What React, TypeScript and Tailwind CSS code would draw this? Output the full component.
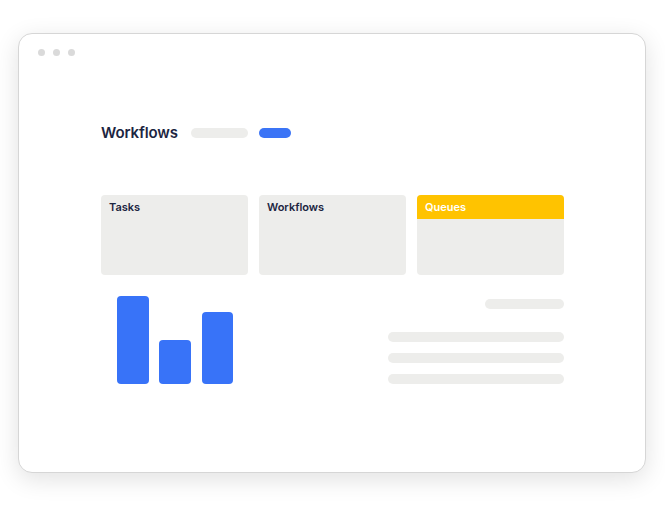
import React from 'react';

const Card = ({ title, active }: { title: string; active?: boolean }) => (
  <div className="h-[80px] rounded-[4px] bg-[#ededeb] overflow-hidden">
    {active ? (
      <div className="h-[24px] bg-[#ffc300] px-[8px] flex items-center text-[11px] font-semibold text-white">
        {title}
      </div>
    ) : (
      <div className="h-[24px] px-[8px] flex items-center text-[11px] font-semibold text-[#1c2541]">
        {title}
      </div>
    )}
  </div>
);

const App = () => {
  return (
    <div className="w-[665px] h-[512px] bg-white pt-[33px] pl-[18px] font-['Inter',sans-serif]">
      <div className="w-[628px] h-[440px] rounded-[14px] border border-[#d6d6d6] bg-white shadow-[0_6px_24px_rgba(0,0,0,0.12)]">
        <div className="flex gap-[8px] pt-[15px] pl-[19px]">
          <span className="w-[7px] h-[7px] rounded-full bg-[#dadada]" />
          <span className="w-[7px] h-[7px] rounded-full bg-[#dadada]" />
          <span className="w-[7px] h-[7px] rounded-full bg-[#dadada]" />
        </div>

        <div className="pl-[82px] pr-[81px]">
          <div className="mt-[67px] h-[20px] flex items-center">
            <h1 className="text-[15px] font-semibold text-[#1c2541] tracking-[-0.1px]">Workflows</h1>
            <span className="ml-[13px] w-[57px] h-[10px] rounded-full bg-[#ededeb]" />
            <span className="ml-[11px] w-[32px] h-[10px] rounded-full bg-[#3b74f6]" />
          </div>

          <div className="mt-[52px] grid grid-cols-3 gap-[11px]">
            <Card title="Tasks" />
            <Card title="Workflows" />
            <Card title="Queues" active />
          </div>

          <div className="mt-[21px] flex justify-between">
            <div className="pl-[16px] h-[88px] flex items-end gap-[10px]">
              <div className="w-[32px] h-[88px] rounded-[4px] bg-[#3873f8]" />
              <div className="w-[32px] h-[44px] rounded-[4px] bg-[#3873f8]" />
              <div className="w-[31px] h-[72px] rounded-[4px] bg-[#3873f8] ml-[1px]" />
            </div>
            <div className="w-[176px] flex flex-col items-end">
              <span className="mt-[3px] w-[79px] h-[10px] rounded-full bg-[#ededeb]" />
              <span className="mt-[23px] w-full h-[10px] rounded-full bg-[#ededeb]" />
              <span className="mt-[11px] w-full h-[10px] rounded-full bg-[#ededeb]" />
              <span className="mt-[11px] w-full h-[10px] rounded-full bg-[#ededeb]" />
            </div>
          </div>
        </div>
      </div>
    </div>
  );
};

export default App;
